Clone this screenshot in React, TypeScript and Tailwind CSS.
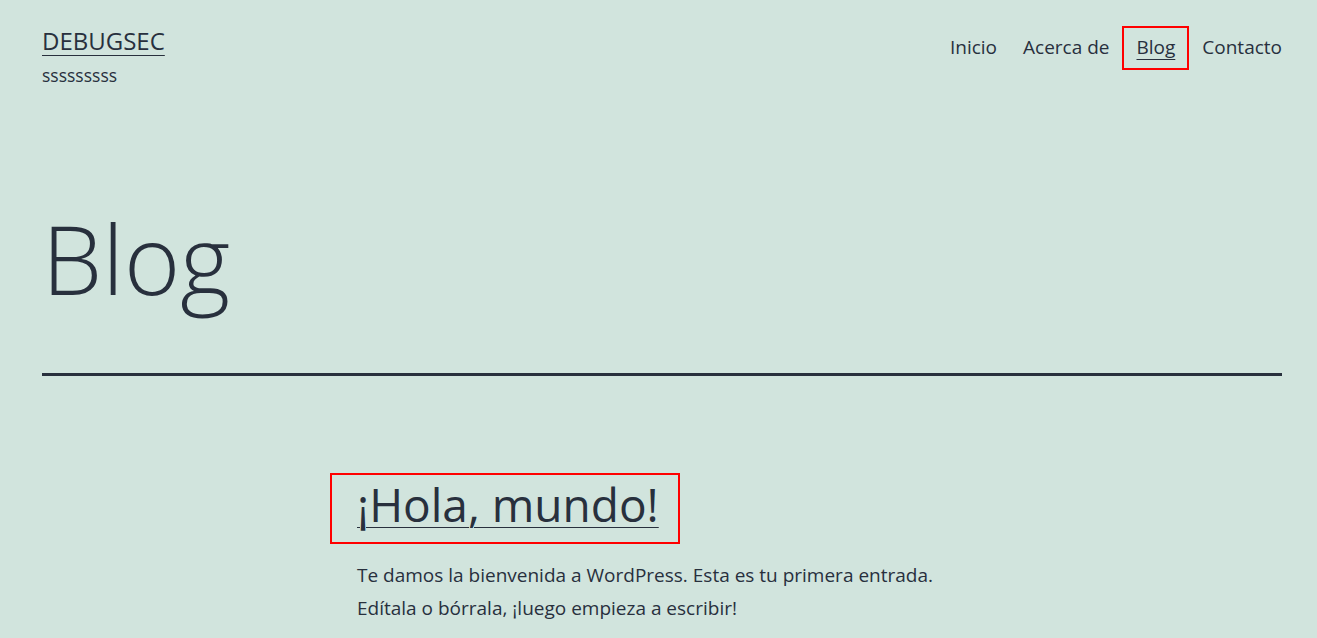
const font = { fontFamily: '"Open Sans", "Noto Sans", sans-serif' };

const navItems = ["Inicio", "Acerca de", "Blog", "Contacto"];

export default function App() {
  return (
    <div
      className="min-h-screen w-full bg-[#d1e4dd] text-[#28303d] font-['Open_Sans','Noto_Sans',sans-serif]"
      style={font}
    >
      <header className="flex items-start justify-between pl-[42px] pr-[22px] pt-[26px]">
        <div>
          <a href="#" className="block text-[24px] leading-[30px] uppercase underline underline-offset-[5px] decoration-1">
            DEBUGSEC
          </a>
          <p className="mt-[7px] text-[17.5px] leading-[24px]">sssssssss</p>
        </div>
        <nav className="flex items-center">
          {navItems.map((item) =>
            item === "Blog" ? (
              <a
                key={item}
                href="#"
                className="block border-2 border-[#ff0000] px-[12px] pt-[7px] pb-[9px] text-[19px] leading-[24px] underline underline-offset-[5px] decoration-1"
              >
                {item}
              </a>
            ) : (
              <a key={item} href="#" className="block px-[13px] pt-[9px] pb-[11px] text-[19px] leading-[24px]">
                {item}
              </a>
            )
          )}
        </nav>
      </header>

      <main className="pl-[42px] pr-[35px]">
        <h1 className="mt-[116px] text-[96px] leading-[110px] font-light">Blog</h1>
        <div className="mt-[60px] h-[3px] w-full bg-[#28303d]" />
      </main>

      <article className="pl-[330px] pt-[97px]">
        <div className="inline-block border-2 border-[#ff0000] pl-[25px] pr-[19px] pt-0 pb-[8px]">
          <h2 className="text-[46px] leading-[59px] underline underline-offset-[5px] decoration-1">
            ¡Hola, mundo!
          </h2>
        </div>
        <div className="pl-[27px] pt-[15px] text-[19px] leading-[33px]">
          <p>Te damos la bienvenida a WordPress. Esta es tu primera entrada.</p>
          <p>Edítala o bórrala, ¡luego empieza a escribir!</p>
        </div>
      </article>
    </div>
  );
}
